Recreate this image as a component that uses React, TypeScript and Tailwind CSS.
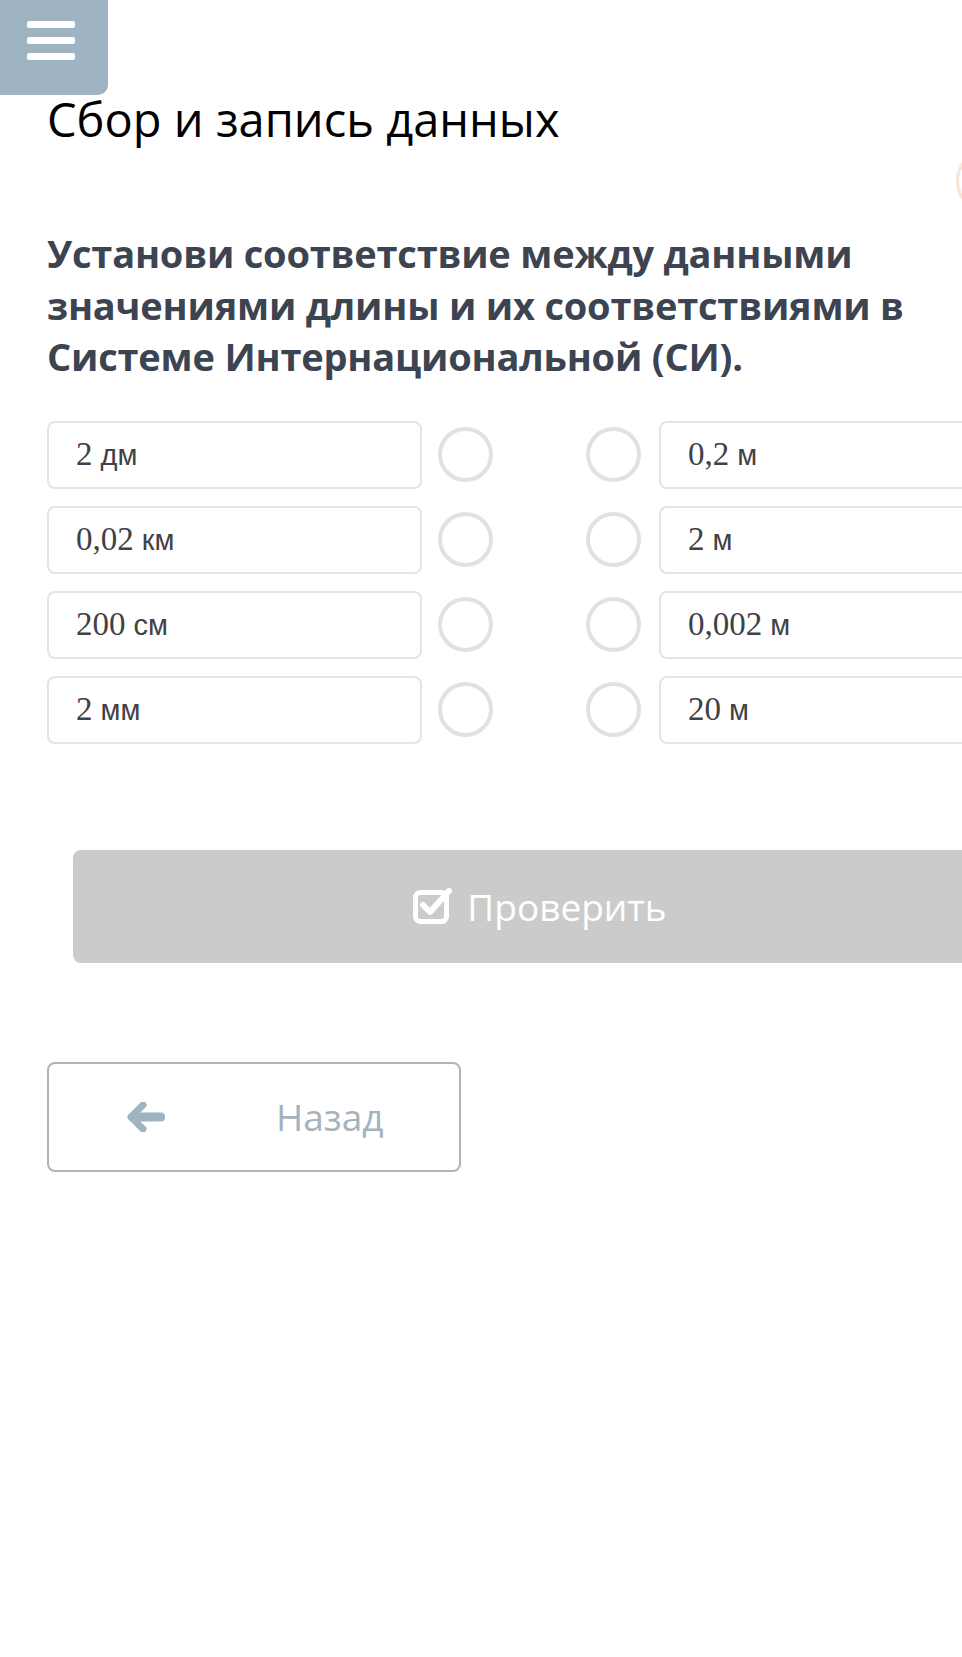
import React from 'react';

const rows = [
  { left: ['2', 'дм'], right: ['0,2', 'м'] },
  { left: ['0,02', 'км'], right: ['2', 'м'] },
  { left: ['200', 'см'], right: ['0,002', 'м'] },
  { left: ['2', 'мм'], right: ['20', 'м'] },
];

const Value = ({ v }: { v: string[] }) => (
  <span className="text-[#3f4246]">
    <span className="font-['Liberation_Serif',serif] text-[33px]">{v[0]}</span>
    <span className="font-['Liberation_Sans',sans-serif] text-[29px] ml-[8px]">{v[1]}</span>
  </span>
);

const Dot = () => <div className="w-[55px] h-[55px] rounded-full border-[4px] border-[#dfe2e5] shrink-0" />;

export default function App() {
  return (
    <div className="relative w-[962px] h-[1657px] overflow-hidden bg-white font-['Open_Sans',sans-serif]">
      {/* меню */}
      <div className="absolute top-0 left-0 w-[108px] h-[95px] bg-[#9fb4c2] rounded-br-[10px] flex flex-col items-center pt-[21px] gap-[9px]">
        <div className="w-[48px] h-[7px] bg-white rounded-[2px] -ml-[6px]" />
        <div className="w-[48px] h-[7px] bg-white rounded-[2px] -ml-[6px]" />
        <div className="w-[48px] h-[7px] bg-white rounded-[2px] -ml-[6px]" />
      </div>
      <div className="absolute top-[148px] right-[-60px] w-[66px] h-[66px] rounded-full border-[3px] border-[#fbe3d6]" />

      <div className="pl-[47px] pt-[90px]">
        <h1 className="text-[47px] leading-[58px] text-black">Сбор и запись данных</h1>

        <p className="mt-[80px] text-[38px] leading-[51.5px] font-bold text-[#3d4451] w-[900px] tracking-[-0.2px]">
          Установи соответствие между данными значениями длины и их соответствиями в Системе Интернациональной (СИ).
        </p>

        <div className="mt-[38px] flex flex-col gap-[17px]">
          {rows.map((r, i) => (
            <div key={i} className="flex items-center">
              <div className="w-[375px] h-[68px] shrink-0 border-[2px] border-[#e2e4e6] rounded-[8px] flex items-center pl-[27px]">
                <Value v={r.left} />
              </div>
              <div className="ml-[16px]"><Dot /></div>
              <div className="ml-[93px]"><Dot /></div>
              <div className="ml-[18px] w-[375px] h-[68px] shrink-0 border-[2px] border-[#e2e4e6] rounded-[8px] flex items-center pl-[27px]">
                <Value v={r.right} />
              </div>
            </div>
          ))}
        </div>

        <div className="mt-[106px] ml-[26px] w-[934px] h-[113px] bg-[#cbcbcb] rounded-[8px] flex items-center justify-center gap-[14px] text-white">
          <svg width="40" height="36" viewBox="0 0 40 36" fill="none">
            <rect x="2.5" y="4.5" width="31" height="29" rx="5" stroke="white" strokeWidth="5" />
            <path d="M10 17 L17 24 L36 3" stroke="white" strokeWidth="6" strokeLinecap="round" strokeLinejoin="round" />
          </svg>
          <span className="text-[37px] leading-none">Проверить</span>
        </div>

        <div className="mt-[99px] w-[414px] h-[110px] border-[2px] border-[#aab6bb] rounded-[8px] flex items-center">
          <svg className="ml-[78px]" width="38" height="30" viewBox="0 0 38 30" fill="none">
            <path d="M16 3 L4 15 L16 27" stroke="#9fb4c2" strokeWidth="7" strokeLinecap="round" strokeLinejoin="round" />
            <path d="M6 15 H34" stroke="#9fb4c2" strokeWidth="9" strokeLinecap="round" />
          </svg>
          <span className="ml-[111px] text-[37px] text-[#a3b3bd] leading-none">Назад</span>
        </div>
      </div>
    </div>
  );
}
